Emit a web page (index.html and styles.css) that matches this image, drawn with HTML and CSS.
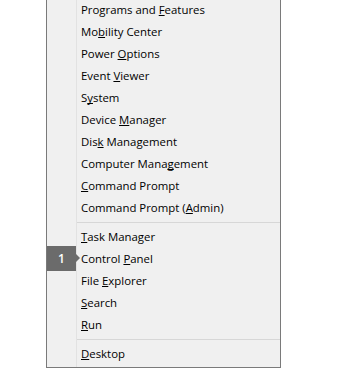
FILE: index.html
```html
<!DOCTYPE html>
<html lang="en">
<head>
  <meta charset="UTF-8">
  <meta name="viewport" content="width=device-width, initial-scale=1.0">
  <title>Quick Link Menu</title>
  <link rel="stylesheet" href="styles.css">
</head>
<body>
  <div class="menu">
    <ul class="menu-list">
      <li>Programs and <u>F</u>eatures</li>
      <li>Mo<u>b</u>ility Center</li>
      <li>Power <u>O</u>ptions</li>
      <li>Event <u>V</u>iewer</li>
      <li>S<u>y</u>stem</li>
      <li>Device <u>M</u>anager</li>
      <li>Dis<u>k</u> Management</li>
      <li>Computer Mana<u>g</u>ement</li>
      <li><u>C</u>ommand Prompt</li>
      <li>Command Prompt (<u>A</u>dmin)</li>
      <li class="sep"></li>
      <li><u>T</u>ask Manager</li>
      <li class="marked">Control <u>P</u>anel</li>
      <li>File <u>E</u>xplorer</li>
      <li><u>S</u>earch</li>
      <li><u>R</u>un</li>
      <li class="sep"></li>
      <li><u>D</u>esktop</li>
    </ul>
    <!-- step number callout -->
    <div class="badge">1</div>
  </div>
</body>
</html>
```

FILE: styles.css
```css
body {
  margin: 0;
  background-color: #fff;
  font-family: "Open Sans", "Noto Sans", Arial, sans-serif;
  font-size: 11.4px;
  color: #000;
}

.menu {
  position: relative;
  width: 204px;
  margin: -1px 0 0 46px;
  padding-left: 29px;
  box-sizing: content-box;
  background-color: #f0f0f0;
  border: 1px solid #7a7a7a;
  border-top: none;
}

.menu-list {
  list-style: none;
  margin: 0;
  padding: 0 0 2px 0;
  border-left: 1px solid #e2e2e2;
}

.menu-list li {
  height: 22px;
  line-height: 22px;
  padding-left: 4px;
  white-space: nowrap;
}

.menu-list li.sep {
  height: 1px;
  padding: 0;
  margin: 3px 0;
  background-color: #d7d7d7;
}

u {
  text-decoration: underline;
  text-decoration-skip-ink: none;
  text-underline-offset: 1px;
}

.badge {
  position: absolute;
  left: 0;
  top: 247px;
  width: 29px;
  height: 25px;
  line-height: 25px;
  background-color: #6b6b6b;
  color: #fff;
  text-align: center;
  font-size: 12px;
  font-weight: 600;
}

.badge::after {
  content: "";
  position: absolute;
  right: -4px;
  top: 8px;
  border-top: 4px solid transparent;
  border-bottom: 4px solid transparent;
  border-left: 4px solid #6b6b6b;
}
```
